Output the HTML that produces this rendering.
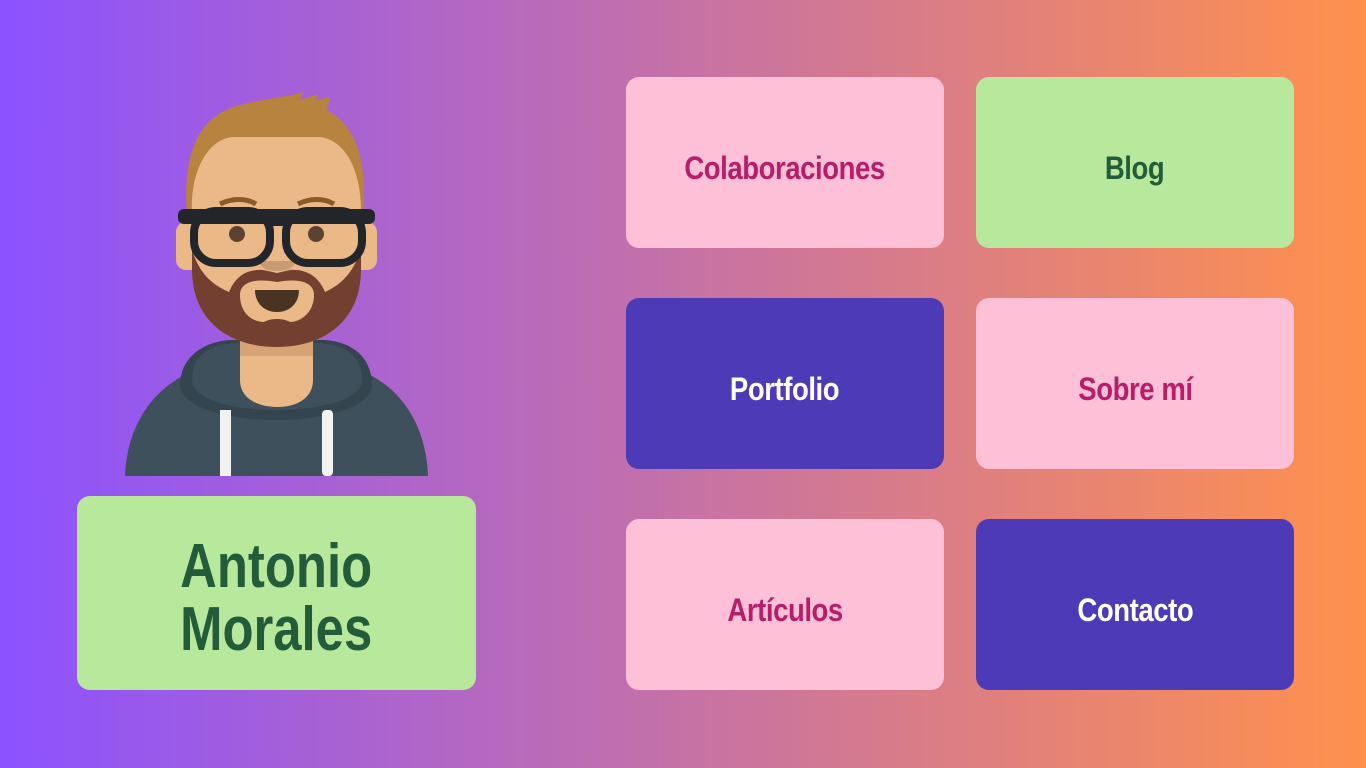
<!DOCTYPE html>
<html><head><meta charset="utf-8"><style>
html,body{margin:0;padding:0;}
body{width:1366px;height:768px;overflow:hidden;position:relative;background:linear-gradient(90deg,#8c52ff 0%,#ff914d 100%);font-family:"Liberation Sans Narrow","Liberation Sans",sans-serif;}
.c{position:absolute;border-radius:13px;display:flex;align-items:center;justify-content:center;font-weight:bold;font-size:32px;letter-spacing:-0.5px;}
.c span{display:inline-block;transform:translateY(6px) scaleX(0.86);}
.p{background:#fec0d7;color:#b81d6a;}
.g{background:#b8e89b;color:#235c3a;}
.v{background:#4d3ab6;color:#fff;}
.name{position:absolute;left:77px;top:496px;width:399px;height:194px;border-radius:13px;background:#b8e89b;color:#235c3a;font-weight:bold;font-size:62px;line-height:63px;text-align:center;display:flex;align-items:center;justify-content:center;}
</style></head><body>
<svg width="1366" height="768" style="position:absolute;left:0;top:0">
 <path d="M125,476 C127,420 160,375 215,365 L340,365 C395,375 426,420 428,476 Z" fill="#3d505c"/>
 <path d="M180,385 C180,360 200,342 230,340 L325,340 C355,342 372,360 372,385 C372,405 330,420 276,420 C222,420 180,405 180,385 Z" fill="#34454f"/>
 <path d="M192,380 C192,356 208,345 235,343 L320,343 C345,345 362,356 362,380 C362,398 325,410 276,410 C228,410 192,398 192,380 Z" fill="#3d505c"/>
 <path d="M240,330 L313,330 L313,380 C313,398 297,407 277,407 C257,407 240,398 240,380 Z" fill="#ebb887"/>
 <rect x="240" y="330" width="73" height="26" fill="#d6a276"/>
 <rect x="220" y="410" width="11" height="66" fill="#f2f2f2"/>
 <rect x="322" y="410" width="11" height="66" rx="4" fill="#f2f2f2"/>
 <path d="M187,215 C182,150 200,115 240,105 C265,98 290,97 303,92 L300,100 L318,94 L316,100 L330,97 L327,110 C355,125 368,160 363,215 Z" fill="#b8823f"/>
 <rect x="176" y="222" width="24" height="48" rx="10" fill="#ebb887"/>
 <rect x="353" y="222" width="24" height="48" rx="10" fill="#ebb887"/>
 <path d="M192,215 C190,170 208,140 232,137 L320,137 C345,140 362,170 361,215 L361,270 C361,320 325,347 277,347 C228,347 192,320 192,270 Z" fill="#ebb887"/>
 <path d="M192,250 L192,270 C192,320 228,347 277,347 C325,347 361,320 361,270 L361,250 C352,275 340,285 325,292 C318,275 305,269 290,270 L277,273 L263,270 C248,269 236,275 229,292 C213,285 200,275 192,250 Z" fill="#723f30"/>
 <path d="M240,295 C240,282 255,278 277,282 C299,278 314,282 314,295 C314,313 300,322 290,322 C283,318 271,318 264,322 C252,322 240,313 240,295 Z" fill="#ebb887"/>
 <path d="M255,290 L299,290 C299,303 290,312 277,312 C264,312 255,303 255,290 Z" fill="#493424"/>
 <path d="M259,261 L296,261 C293,269 286,271 277,271 C268,271 261,269 259,261 Z" fill="#c99b73"/>
 <path d="M220,204 C232,198 246,198 256,204" stroke="#8b5a2b" stroke-width="5" fill="none"/>
 <path d="M298,204 C310,198 324,198 334,204" stroke="#8b5a2b" stroke-width="5" fill="none"/>
 <rect x="178" y="209" width="197" height="15" rx="6" fill="#22262b"/>
 <rect x="194" y="211" width="76" height="52" rx="22" fill="none" stroke="#22262b" stroke-width="8"/>
 <rect x="286" y="211" width="76" height="52" rx="22" fill="none" stroke="#22262b" stroke-width="8"/>
 <rect x="265" y="218" width="25" height="8" fill="#22262b"/>
 <circle cx="237" cy="234" r="8" fill="#5d4231"/>
 <circle cx="316" cy="234" r="8" fill="#5d4231"/>
</svg>
<div class="name"><span style="display:inline-block;transform:translateY(5px) scaleX(0.82)">Antonio<br>Morales</span></div>
<div class="c p" style="left:626px;top:77px;width:318px;height:171px"><span>Colaboraciones</span></div>
<div class="c g" style="left:976px;top:77px;width:318px;height:171px"><span>Blog</span></div>
<div class="c v" style="left:626px;top:298px;width:318px;height:171px"><span>Portfolio</span></div>
<div class="c p" style="left:976px;top:298px;width:318px;height:171px"><span>Sobre mí</span></div>
<div class="c p" style="left:626px;top:519px;width:318px;height:171px"><span>Artículos</span></div>
<div class="c v" style="left:976px;top:519px;width:318px;height:171px"><span>Contacto</span></div>
</body></html>
